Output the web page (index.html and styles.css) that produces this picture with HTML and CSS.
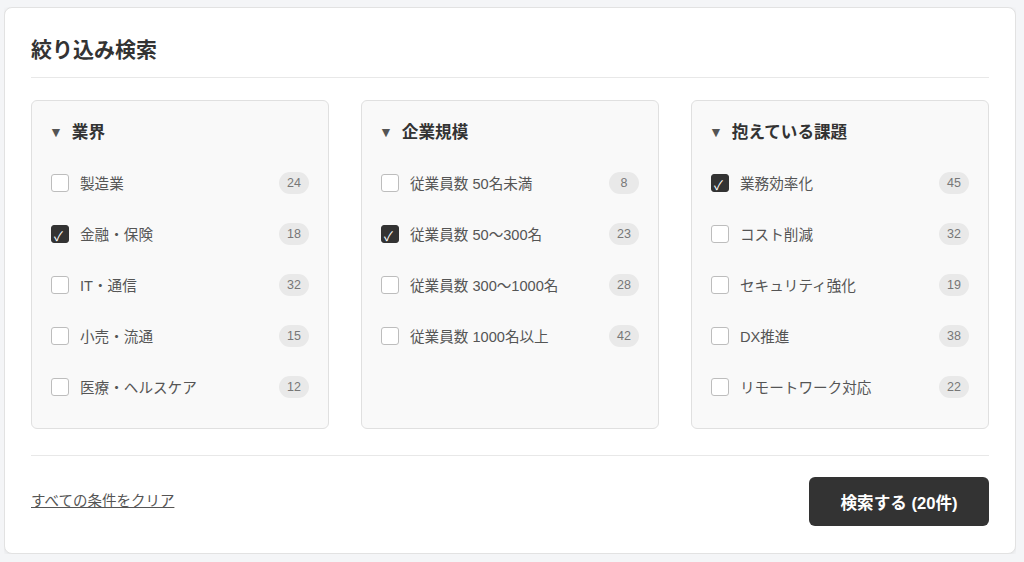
FILE: index.html
```html
<!DOCTYPE html>
<html lang="ja">
<head>
    <meta charset="UTF-8">
    <title>絞り込み検索</title>
    <link rel="stylesheet" href="styles.css">
</head>
<body>
    <div class="card">
        <h1 class="title">絞り込み検索</h1>

        <div class="filters">
            <div class="panel">
                <h2 class="panel-title"><span class="caret">▼</span>業界</h2>
                <ul class="options">
                    <li class="option"><span class="box"></span><span class="label">製造業</span><span class="count">24</span></li>
                    <li class="option"><span class="box checked">✓</span><span class="label">金融・保険</span><span class="count">18</span></li>
                    <li class="option"><span class="box"></span><span class="label">IT・通信</span><span class="count">32</span></li>
                    <li class="option"><span class="box"></span><span class="label">小売・流通</span><span class="count">15</span></li>
                    <li class="option"><span class="box"></span><span class="label">医療・ヘルスケア</span><span class="count">12</span></li>
                </ul>
            </div>
            <div class="panel">
                <h2 class="panel-title"><span class="caret">▼</span>企業規模</h2>
                <ul class="options">
                    <li class="option"><span class="box"></span><span class="label">従業員数 50名未満</span><span class="count">8</span></li>
                    <li class="option"><span class="box checked">✓</span><span class="label">従業員数 50〜300名</span><span class="count">23</span></li>
                    <li class="option"><span class="box"></span><span class="label">従業員数 300〜1000名</span><span class="count">28</span></li>
                    <li class="option"><span class="box"></span><span class="label">従業員数 1000名以上</span><span class="count">42</span></li>
                </ul>
            </div>
            <div class="panel">
                <h2 class="panel-title"><span class="caret">▼</span>抱えている課題</h2>
                <ul class="options">
                    <li class="option"><span class="box checked">✓</span><span class="label">業務効率化</span><span class="count">45</span></li>
                    <li class="option"><span class="box"></span><span class="label">コスト削減</span><span class="count">32</span></li>
                    <li class="option"><span class="box"></span><span class="label">セキュリティ強化</span><span class="count">19</span></li>
                    <li class="option"><span class="box"></span><span class="label">DX推進</span><span class="count">38</span></li>
                    <li class="option"><span class="box"></span><span class="label">リモートワーク対応</span><span class="count">22</span></li>
                </ul>
            </div>
        </div>

        <div class="actions">
            <a href="#" class="clear-link">すべての条件をクリア</a>
            <button type="button" class="search-btn">検索する (20件)</button>
        </div>
    </div>
</body>
</html>
```

FILE: styles.css
```css
body {
    margin: 7px 8px 0 4px;
    background-color: #f4f5f7;
    font-family: "Liberation Sans", Arial, "Noto Sans CJK JP", sans-serif;
    color: #333;
}
.card {
    background: #fff;
    border: 1px solid #e2e2e2;
    border-radius: 8px;
    box-shadow: 0 1px 4px rgba(0, 0, 0, 0.08);
    padding: 28px 26px 26px 26px;
    height: 547px;
    box-sizing: border-box;
}
.title {
    margin: 0;
    font-size: 21px;
    line-height: 28px;
    font-weight: bold;
    color: #333;
    padding-bottom: 13px;
    border-bottom: 1px solid #e8e8e8;
}
.filters {
    display: grid;
    grid-template-columns: repeat(3, 1fr);
    gap: 32px;
    margin-top: 22px;
    padding-bottom: 26px;
    border-bottom: 1px solid #e8e8e8;
}
.panel {
    background: #f9f9f9;
    border: 1px solid #e0e0e0;
    border-radius: 6px;
    padding: 20px 19px 26px 19px;
}
.panel-title {
    margin: 0 0 22px 0;
    font-size: 16.6px;
    line-height: 24px;
    font-weight: bold;
    color: #333;
    display: flex;
    align-items: center;
}
.caret {
    font-size: 14px;
    color: #555;
    margin-left: -2px;
    margin-right: 9px;
    position: relative;
    top: -1px;
}
.options {
    list-style: none;
    margin: 0;
    padding: 0;
    display: flex;
    flex-direction: column;
    gap: 20px;
}
.option {
    display: flex;
    align-items: center;
    height: 31px;
}
.box {
    width: 18px;
    height: 18px;
    box-sizing: border-box;
    border: 1.5px solid #bdbdbd;
    border-radius: 3px;
    background: #fff;
    margin-right: 11px;
    flex-shrink: 0;
}
.box.checked {
    background: #333;
    border-color: #333;
    color: #fff;
    font-size: 13px;
    line-height: 22px;
    padding-left: 2px;
    overflow: hidden;
}
.label {
    flex: 1;
    font-size: 14.6px;
    color: #555;
}
.count {
    min-width: 30px;
    height: 22px;
    padding: 0 6px;
    box-sizing: border-box;
    border-radius: 11px;
    background: #e9e9e9;
    color: #777;
    font-size: 12.5px;
    line-height: 22px;
    text-align: center;
}
.actions {
    display: flex;
    justify-content: space-between;
    align-items: center;
    margin-top: 21px;
}
.clear-link {
    font-size: 14.5px;
    color: #555;
    text-decoration: underline;
    margin-top: -4px;
}
.search-btn {
    width: 180px;
    height: 49px;
    background: #333;
    color: #fff;
    border: none;
    border-radius: 6px;
    font-family: inherit;
    font-size: 16.6px;
    font-weight: bold;
    cursor: pointer;
}
```
